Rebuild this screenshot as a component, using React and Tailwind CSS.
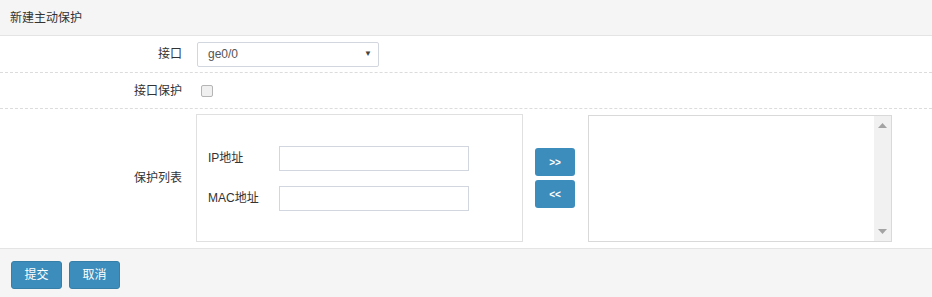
import React from "react";

function Label({ children, className = "" }) {
    return (
        <div className={"w-[182px] shrink-0 text-right text-[12px] text-[#333] " + className}>
            {children}
        </div>
    );
}

function TextInput() {
    return (
        <div className="w-[190px] h-[25px] border border-[#d2d6de] bg-white"/>
    );
}

function ScrollArrow({ up }) {
    return (
        <svg width="9" height="5" viewBox="0 0 9 5">
            {up
                ? <polygon points="0,5 4.5,0 9,5" fill="#a3a3a3"/>
                : <polygon points="0,0 4.5,5 9,0" fill="#a3a3a3"/>}
        </svg>
    );
}

export default function App() {
    return (
        <div
            className="w-[932px] h-[297px] bg-white flex flex-col text-[#333]"
            style={{ fontFamily: '"Liberation Sans", "Noto Sans CJK SC", sans-serif' }}
        >
            {/* header */}
            <div className="h-[36px] shrink-0 bg-[#f5f5f5] border-b border-[#e4e4e4] flex items-center px-[10px] text-[12px]">
                新建主动保护
            </div>

            {/* interface */}
            <div className="h-[37px] shrink-0 flex items-center border-b border-dashed border-[#dcdcdc]">
                <Label>接口</Label>
                <div className="ml-[15px] w-[182px] h-[25px] border border-[#d2d6de] rounded-[2px] flex items-center justify-between pl-[10px] pr-[6px] text-[12px] text-[#555]">
                    <span>ge0/0</span>
                    <span className="text-[8px] text-[#444]">▼</span>
                </div>
            </div>

            {/* interface protect */}
            <div className="h-[36px] shrink-0 flex items-center border-b border-dashed border-[#dcdcdc]">
                <Label>接口保护</Label>
                <div className="ml-[19px] w-[12px] h-[12px] border border-[#b5b5b5] rounded-[2px] bg-[#f0f0f0]"/>
            </div>

            {/* protect list */}
            <div className="shrink-0 flex items-center pt-[5px]">
                <Label>保护列表</Label>
                <div className="ml-[14px] w-[327px] h-[128px] border border-[#e0e0e0] flex flex-col justify-center gap-[15px] pl-[11px]">
                    <div className="flex items-center">
                        <div className="w-[71px] text-[12px]">IP地址</div>
                        <TextInput/>
                    </div>
                    <div className="flex items-center">
                        <div className="w-[71px] text-[12px]">MAC地址</div>
                        <TextInput/>
                    </div>
                </div>
                <div className="ml-[12px] flex flex-col gap-[4px]">
                    <div className="w-[40px] h-[28px] bg-[#3c8dbc] rounded-[3px] flex items-center justify-center text-white text-[10px] font-bold">&gt;&gt;</div>
                    <div className="w-[40px] h-[28px] bg-[#3c8dbc] rounded-[3px] flex items-center justify-center text-white text-[10px] font-bold">&lt;&lt;</div>
                </div>
                <div className="ml-[13px] w-[304px] h-[127px] border border-[#d9d9d9] flex justify-end">
                    <div className="w-[17px] h-full bg-[#f1f1f1] flex flex-col items-center justify-between py-[7px]">
                        <ScrollArrow up/>
                        <ScrollArrow/>
                    </div>
                </div>
            </div>

            {/* footer */}
            <div className="mt-[6px] flex-1 bg-[#f5f5f5] border-t border-[#e4e4e4] flex items-start gap-[7px] px-[11px] pt-[12px]">
                <div className="w-[51px] h-[28px] bg-[#3c8dbc] border border-[#367fa9] rounded-[3px] flex items-center justify-center text-white text-[12px]">提交</div>
                <div className="w-[51px] h-[28px] bg-[#3c8dbc] border border-[#367fa9] rounded-[3px] flex items-center justify-center text-white text-[12px]">取消</div>
            </div>
        </div>
    );
}
